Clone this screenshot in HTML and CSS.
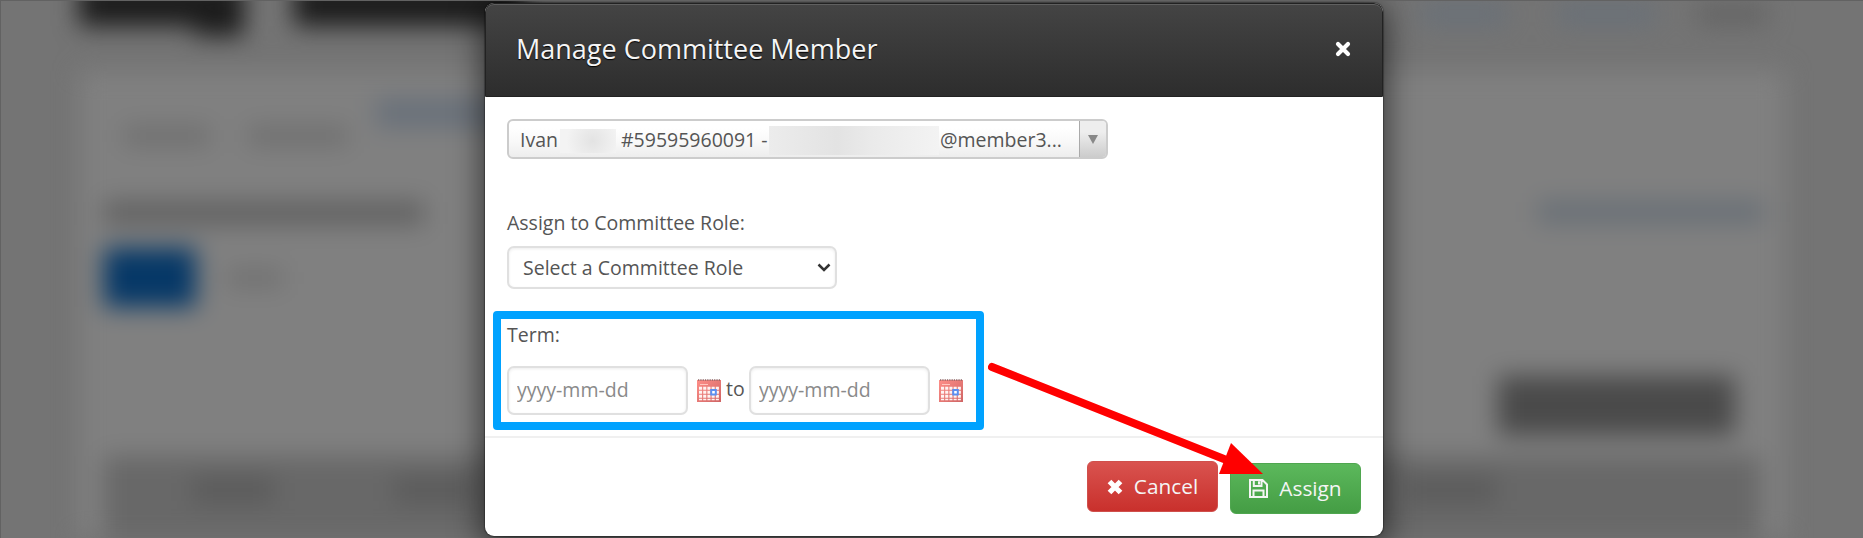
FILE: index.html
```html
<!DOCTYPE html>
<html lang="en">
<head>
    <meta charset="UTF-8">
    <meta name="viewport" content="width=device-width, initial-scale=1.0">
    <title>Manage Committee Member</title>
    <link rel="stylesheet" href="styles.css">
</head>
<body>

<div class="page" aria-hidden="true">
    <div class="page-header">
        <div class="logo">
            <span class="logo-word"></span>
            <span class="logo-tail"></span>
            <span class="logo-word logo-wide"></span>
        </div>
        <div class="top-nav">
            <span></span>
            <span class="nav-second"></span>
            <span class="nav-user"></span>
        </div>
    </div>
    <div class="card">
        <div class="tabs">
            <span class="tab"></span>
            <span class="tab tab-second"></span>
            <span class="tab-active"></span>
        </div>
        <div class="heading-row">
            <span class="heading"></span>
            <span class="help-link"></span>
        </div>
        <div class="pills">
            <span class="pill-active"></span>
            <span class="pill"></span>
        </div>
        <div class="add-row"><span class="add-button"></span></div>
        <div class="table-head">
            <span class="th"></span>
            <span class="th th-second"></span>
            <span class="th th-last"></span>
        </div>
    </div>
</div>

<div class="modal" role="dialog">
    <div class="modal-header">
        <h3>Manage Committee Member</h3>
        <button class="close" type="button" aria-label="Close">
            <svg width="16" height="16" viewBox="0 0 16 16"><path d="M3 3l10 10M13 3L3 13"/></svg>
        </button>
    </div>

    <div class="modal-body">
        <div class="chosen">
            <div class="chosen-text">
                <span class="first-name">Ivan</span>
                <span class="redacted redacted-name"></span>
                <span class="member-id">#59595960091 -</span>
                <span class="redacted redacted-mail"></span>
                <span class="mail-host">@member3...</span>
            </div>
            <div class="chosen-arrow">
                <svg width="10" height="9" viewBox="0 0 10 9"><path d="M0 0h10L5 9z"/></svg>
            </div>
        </div>

        <label class="role-label" for="role">Assign to Committee Role:</label>
        <div class="select-wrap">
            <select id="role">
                <option>Select a Committee Role</option>
            </select>
            <svg class="chevron" width="14" height="9" viewBox="0 0 14 9"><path d="M1.500 1.500L7 7l5.500-5.500"/></svg>
        </div>

        <div class="term">
            <label for="start">Term:</label>
            <div class="dates">
                <input type="text" id="start" placeholder="yyyy-mm-dd">
                <svg class="calendar" width="24" height="23" viewBox="0 0 24 23"><use href="#calendar"/></svg>
                <span class="to">to</span>
                <input type="text" id="end" placeholder="yyyy-mm-dd">
                <svg class="calendar" width="24" height="23" viewBox="0 0 24 23"><use href="#calendar"/></svg>
            </div>
        </div>
    </div>

    <div class="modal-footer">
        <button class="btn btn-danger" type="button">
            <svg width="16" height="16" viewBox="0 0 16 16"><path class="cross" d="M2.500 2.500l11 11M13.500 2.500l-11 11"/></svg>
            Cancel
        </button>
        <button class="btn btn-success" type="button">
            <svg width="19" height="19" viewBox="0 0 19 19">
                <path class="disk" d="M1 1h12.500l4.500 4.500V18H1zM4.800 1v6h7.700V1M4.500 18v-6.500h10V18"/>
                <path class="disk-tab" d="M9 2.300h2v3.300H9z"/>
            </svg>
            Assign
        </button>
    </div>
</div>

<svg class="pointer" width="276" height="122" viewBox="0 0 276 122">
    <path class="pointer-line" d="M4 10L236 102"/>
    <path class="pointer-head" d="M243 86l32 31h-44z"/>
</svg>

<svg class="sprite" width="0" height="0">
    <defs>
        <linearGradient id="cal-red" x2="1" y2="1">
            <stop offset="0" stop-color="#ff8f88"/>
            <stop offset="1" stop-color="#cf6464"/>
        </linearGradient>
        <symbol id="calendar" viewBox="0 0 24 23">
            <path fill="url(#cal-red)" d="M0 1h24v22H0z"/>
            <path stroke="#8f6565" stroke-width="1.500" stroke-dasharray="1.300 1" d="M1 1h22"/>
            <path stroke="#ffc7c0" d="M3 5.500h8"/>
            <path fill="none" stroke="#fff3f1" stroke-width="2.900" stroke-dasharray="3.100 1.100" d="M2 9.300h20M2 13.300h20M2 17.300h20"/>
            <path fill="none" stroke="#fff3f1" stroke-width="1.500" stroke-dasharray="3.100 1.100" d="M2 20.500h20"/>
            <path fill="#fff" stroke="#5a8ff0" stroke-width="2" d="M14.200 11h4.600v4.600h-4.600z"/>
        </symbol>
    </defs>
</svg>

</body>
</html>
```

FILE: styles.css
```css
* {
    box-sizing: border-box;
}
body {
    font-family: 'Open Sans', 'Noto Sans', sans-serif;
    font-size: 19.5px;
    color: #555;
    background: #747474;
    height: 538px;
    margin: 0;
    border: solid #626262;
    border-width: 1px 0 0 1px;
    overflow: hidden;
    position: relative;
}

/* blurred page behind the dialog */
.page {
    height: 537px;
    padding: 0 78px;
    filter: blur(12px);
}
.page-header {
    display: flex;
    justify-content: space-between;
    height: 70px;
}
.logo {
    display: flex;
    margin-top: -20px;
}
.logo-word {
    width: 115px;
    height: 45px;
    background: #1c1c1c;
}
.logo-tail {
    width: 50px;
    height: 55px;
    background: #1c1c1c;
}
.logo-wide {
    width: 230px;
    margin-left: 50px;
}
.top-nav {
    display: flex;
    margin-right: 18px;
}
.top-nav span {
    width: 86px;
    height: 20px;
    margin-top: 3px;
    background: #687079;
}
.top-nav .nav-second {
    width: 98px;
    margin-left: 50px;
}
.top-nav .nav-user {
    width: 70px;
    margin-left: 42px;
    background: #636363;
}
.card {
    height: 467px;
    padding: 28px 25px 0;
    background: #808080;
}
.tabs {
    display: flex;
    height: 102px;
}
.tab {
    width: 86px;
    height: 18px;
    margin: 28px 0 0 20px;
    background: #6e6e6e;
}
.tab-second {
    width: 100px;
    margin-left: 38px;
}
.tab-active {
    width: 150px;
    height: 28px;
    margin-left: 28px;
    background: #68707a;
}
.heading-row {
    display: flex;
    justify-content: space-between;
    height: 46px;
}
.heading {
    width: 320px;
    height: 24px;
    background: #626262;
}
.help-link {
    width: 225px;
    height: 22px;
    margin-right: -3px;
    background: #686f76;
}
.pills {
    display: flex;
    align-items: center;
    height: 61px;
}
.pill-active {
    width: 92px;
    height: 59px;
    background: #063867;
}
.pill {
    width: 56px;
    height: 18px;
    margin-left: 31px;
    background: #707070;
}
.add-row {
    display: flex;
    justify-content: flex-end;
    padding: 68px 25px 0 0;
    height: 148px;
}
.add-button {
    width: 237px;
    height: 59px;
    background: #4a4a4a;
}
.table-head {
    display: flex;
    height: 82px;
    background: #686868;
}
.th {
    width: 82px;
    height: 24px;
    margin: 22px 0 0 88px;
    background: #5a5a5a;
}
.th-second {
    margin-left: 120px;
}
.th-last {
    width: 90px;
    margin-left: 930px;
}

.modal {
    position: absolute;
    top: 2px;
    left: 484px;
    width: 898px;
    height: 533px;
    display: flex;
    flex-direction: column;
    background: #fff;
    border-radius: 9px;
    box-shadow: 0 0 1px 1px rgba(0, 0, 0, 0.3), 0 5px 30px 4px rgba(0, 0, 0, 0.55);
}
.modal-header {
    display: flex;
    justify-content: space-between;
    align-items: center;
    height: 94px;
    padding: 0 31px 3px 30px;
    background: linear-gradient(#444, #2d2d2d);
    border: 1px solid #222;
    border-radius: 9px 9px 0 0;
    box-shadow: inset 0 1px 0 #606060;
}
.modal-header h3 {
    margin: 0;
    font-size: 27px;
    font-weight: 400;
    color: #f5f5f5;
    text-shadow: 0 1px 1px #000;
}
.close {
    display: flex;
    padding: 0;
    border: 0;
    background: none;
}
.close path {
    stroke: #fff;
    stroke-width: 4.2;
    stroke-linecap: round;
}
.modal-body {
    display: flex;
    flex-direction: column;
    align-items: flex-start;
    flex: 1;
    padding: 22px 8px 0 22px;
}
.chosen {
    display: flex;
    width: 601px;
    height: 40px;
    border: 2px solid #ccc;
    border-radius: 6px;
    background: linear-gradient(#fff 20%, #f8f8f8 60%, #ededed);
    overflow: hidden;
}
.chosen-text {
    display: flex;
    align-items: center;
    flex: 1;
    padding-left: 11px;
    white-space: nowrap;
}
.first-name {
    width: 40px;
}
.redacted {
    width: 56px;
    height: 24px;
    margin-top: 4px;
    background: radial-gradient(circle at 58% 50%, #e3e3e3, #f3f3f3 75%);
}
.member-id {
    width: 148px;
    margin-left: 5px;
}
.redacted-mail {
    width: 170px;
    height: 29px;
    margin-top: 3px;
    background: linear-gradient(90deg, #ececec, #e3e3e3 40%, #eaeaea 60%, #f3f3f3);
}
.mail-host {
    margin-left: 1px;
}
.chosen-arrow {
    display: flex;
    justify-content: center;
    align-items: center;
    width: 27px;
    border-left: 1px solid #aaa;
    background: linear-gradient(#eee 30%, #ccc);
}
.chosen-arrow path {
    fill: #888;
}
.role-label {
    margin-top: 50px;
    line-height: 28px;
}
.select-wrap {
    position: relative;
    margin-top: 9px;
}
select, input {
    display: block;
    font: inherit;
    color: #555;
    background: #fff;
    border: 2px solid #e0e0e0;
    border-radius: 7px;
    box-shadow: inset 0 1px 3px rgba(0, 0, 0, 0.08);
}
select {
    appearance: none;
    width: 330px;
    height: 43px;
    padding: 0 14px;
}
.chevron {
    position: absolute;
    right: 6px;
    top: 17px;
}
.chevron path {
    fill: none;
    stroke: #333;
    stroke-width: 2.5;
}
.term {
    width: 491px;
    height: 119px;
    margin: 22px 0 0 -14px;
    padding: 8px 6px;
    border: 8px solid #00a2ff;
    border-radius: 4px;
}
.term label {
    display: block;
    line-height: 28px;
    margin-top: -6px;
}
.dates {
    display: flex;
    align-items: center;
    margin-top: 17px;
}
input {
    width: 181px;
    height: 49px;
    padding: 0 8px 3px;
}
input::placeholder {
    color: #8a8a8a;
    opacity: 1;
}
.calendar {
    margin-left: 9px;
}
.to {
    width: 23px;
    margin: -4px 0 0 5px;
}
.modal-footer {
    display: flex;
    justify-content: flex-end;
    align-items: flex-start;
    gap: 12px;
    height: 100px;
    padding: 23px 22px 0 0;
    border-top: 2px solid #f0f0f0;
}
.btn {
    display: flex;
    justify-content: center;
    align-items: center;
    gap: 11px;
    width: 131px;
    height: 51px;
    padding: 0 0 2px;
    font: inherit;
    font-size: 20.8px;
    color: #f5f5f5;
    border-radius: 6px;
}
.btn svg {
    margin-top: 2px;
}
.btn-danger {
    background: linear-gradient(#d9534f, #c9302c);
    border: 1px solid #d0504c;
}
.btn-success {
    margin-top: 2px;
    background: linear-gradient(#5cb85c, #449d44);
    border: 1px solid #4fa64f;
}
.cross {
    stroke: #fff;
    stroke-width: 5.2;
}
.disk {
    fill: none;
    stroke: #f5f5f5;
    stroke-width: 2;
}
.disk-tab {
    fill: #f5f5f5;
}

/* callout arrow lies over the dialog */
.pointer {
    position: absolute;
    left: 987px;
    top: 356px;
}
.pointer-line {
    stroke: #f00;
    stroke-width: 8;
    stroke-linecap: round;
}
.pointer-head {
    fill: #f00;
}
.sprite {
    position: absolute;
}
```
